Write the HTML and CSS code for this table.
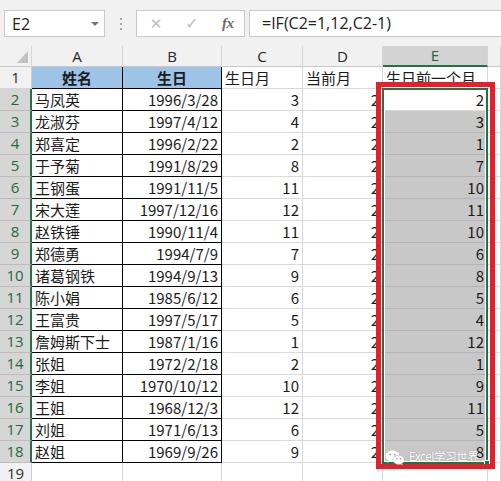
FILE: index.html
```html
<!DOCTYPE html>
<html lang="zh">
<head>
<meta charset="utf-8">
<link rel="stylesheet" href="styles.css">
</head>
<body>
<div class="app">
  <div class="toolbar">
    <div class="namebox"><span>E2</span><i class="caret"></i></div>
    <div class="grip"><i></i><i></i><i></i></div>
    <div class="fxbox">
      <span class="ico x">✕</span>
      <span class="ico ok">✓</span>
      <span class="ico fx">fx</span>
    </div>
    <div class="formula">=IF(C2=1,12,C2-1)</div>
  </div>

  <div class="sheet">
    <div class="row colhead">
      <div class="h corner"><i class="tri"></i></div>
      <div class="h">A</div>
      <div class="h">B</div>
      <div class="h">C</div>
      <div class="h">D</div>
      <div class="h sel">E</div>
      <div class="h"></div>
    </div>

    <div class="row">
      <div class="rh">1</div>
      <div class="c t head">姓名</div>
      <div class="c t head">生日</div>
      <div class="c">生日月</div>
      <div class="c">当前月</div>
      <div class="c">生日前一个月</div>
      <div class="c"></div>
    </div>

    <div class="row"><div class="rh on">2</div><div class="c t">马凤英</div><div class="c t n">1996/3/28</div><div class="c n">3</div><div class="c n">2</div><div class="c n act">2</div><div class="c"></div></div>
    <div class="row"><div class="rh on">3</div><div class="c t">龙淑芬</div><div class="c t n">1997/4/12</div><div class="c n">4</div><div class="c n">2</div><div class="c n g">3</div><div class="c"></div></div>
    <div class="row"><div class="rh on">4</div><div class="c t">郑喜定</div><div class="c t n">1996/2/22</div><div class="c n">2</div><div class="c n">2</div><div class="c n g">1</div><div class="c"></div></div>
    <div class="row"><div class="rh on">5</div><div class="c t">于予菊</div><div class="c t n">1991/8/29</div><div class="c n">8</div><div class="c n">2</div><div class="c n g">7</div><div class="c"></div></div>
    <div class="row"><div class="rh on">6</div><div class="c t">王钢蛋</div><div class="c t n">1991/11/5</div><div class="c n">11</div><div class="c n">2</div><div class="c n g">10</div><div class="c"></div></div>
    <div class="row"><div class="rh on">7</div><div class="c t">宋大莲</div><div class="c t n">1997/12/16</div><div class="c n">12</div><div class="c n">2</div><div class="c n g">11</div><div class="c"></div></div>
    <div class="row"><div class="rh on">8</div><div class="c t">赵铁锤</div><div class="c t n">1990/11/4</div><div class="c n">11</div><div class="c n">2</div><div class="c n g">10</div><div class="c"></div></div>
    <div class="row"><div class="rh on">9</div><div class="c t">郑德勇</div><div class="c t n">1994/7/9</div><div class="c n">7</div><div class="c n">2</div><div class="c n g">6</div><div class="c"></div></div>
    <div class="row"><div class="rh on">10</div><div class="c t">诸葛钢铁</div><div class="c t n">1994/9/13</div><div class="c n">9</div><div class="c n">2</div><div class="c n g">8</div><div class="c"></div></div>
    <div class="row"><div class="rh on">11</div><div class="c t">陈小娟</div><div class="c t n">1985/6/12</div><div class="c n">6</div><div class="c n">2</div><div class="c n g">5</div><div class="c"></div></div>
    <div class="row"><div class="rh on">12</div><div class="c t">王富贵</div><div class="c t n">1997/5/17</div><div class="c n">5</div><div class="c n">2</div><div class="c n g">4</div><div class="c"></div></div>
    <div class="row"><div class="rh on">13</div><div class="c t">詹姆斯下士</div><div class="c t n">1987/1/16</div><div class="c n">1</div><div class="c n">2</div><div class="c n g">12</div><div class="c"></div></div>
    <div class="row"><div class="rh on">14</div><div class="c t">张姐</div><div class="c t n">1972/2/18</div><div class="c n">2</div><div class="c n">2</div><div class="c n g">1</div><div class="c"></div></div>
    <div class="row"><div class="rh on">15</div><div class="c t">李姐</div><div class="c t n">1970/10/12</div><div class="c n">10</div><div class="c n">2</div><div class="c n g">9</div><div class="c"></div></div>
    <div class="row"><div class="rh on">16</div><div class="c t">王姐</div><div class="c t n">1968/12/3</div><div class="c n">12</div><div class="c n">2</div><div class="c n g">11</div><div class="c"></div></div>
    <div class="row"><div class="rh on">17</div><div class="c t">刘姐</div><div class="c t n">1971/6/13</div><div class="c n">6</div><div class="c n">2</div><div class="c n g">5</div><div class="c"></div></div>
    <div class="row"><div class="rh on">18</div><div class="c t">赵姐</div><div class="c t n">1969/9/26</div><div class="c n">9</div><div class="c n">2</div><div class="c n g">8</div><div class="c"></div></div>
    <div class="row"><div class="rh">19</div><div class="c"></div><div class="c"></div><div class="c"></div><div class="c"></div><div class="c"></div><div class="c"></div></div>

    <div class="selection"><i class="handle"></i></div>
    <div class="redbox"></div>
    <div class="watermark">
      <svg class="wx" width="20" height="15" viewBox="0 0 20 15">
        <ellipse cx="7.5" cy="6" rx="7" ry="5.6" fill="#fff"/>
        <path d="M3 10 L2.4 13 L5.6 11 Z" fill="#fff"/>
        <circle cx="5.2" cy="4.6" r="0.9" fill="#9a9a9a"/>
        <circle cx="9.8" cy="4.6" r="0.9" fill="#9a9a9a"/>
        <ellipse cx="13.6" cy="9.8" rx="5.8" ry="4.6" fill="#fff" stroke="#b0b0b0" stroke-width="0.6"/>
        <path d="M16.8 13.4 L17.8 15 L15.2 14 Z" fill="#fff"/>
        <circle cx="11.8" cy="8.8" r="0.75" fill="#9a9a9a"/>
        <circle cx="15.4" cy="8.8" r="0.75" fill="#9a9a9a"/>
      </svg>
      <span>Excel学习世界</span>
    </div>
  </div>
</div>
</body>
</html>
```

FILE: styles.css
```css
* { box-sizing: border-box; margin: 0; padding: 0; }
html, body { width: 501px; height: 481px; overflow: hidden; background: #fff; }
body { font-family: "Noto Sans CJK SC", "Noto Sans", sans-serif; color: #1b1b1b; }

.app { width: 501px; }

/* formula bar */
.toolbar {
  height: 46px;
  background: #f1f1f1;
  display: flex;
  align-items: flex-start;
  padding-top: 10px;
}
.namebox {
  margin-left: 4px;
  width: 101px;
  height: 27px;
  background: #fff;
  border: 1px solid #c9c9c9;
  display: flex;
  align-items: center;
  justify-content: space-between;
  padding: 0 5px 0 7px;
  font-family: "Open Sans", sans-serif;
  font-size: 16px;
  color: #222;
}
.caret {
  width: 0; height: 0;
  border-left: 4px solid transparent;
  border-right: 4px solid transparent;
  border-top: 4px solid #777;
  margin-top: 1px;
}
.grip {
  width: 31px;
  height: 27px;
  display: flex;
  flex-direction: column;
  align-items: center;
  justify-content: center;
  gap: 3px;
}
.grip i { width: 2px; height: 2px; background: #a8a8a8; }
.fxbox {
  width: 109px;
  height: 27px;
  background: #fff;
  border: 1px solid #c9c9c9;
  display: flex;
  align-items: center;
  padding-left: 12px;
}
.ico { display: inline-block; text-align: center; }
.ico.x { width: 14px; color: #bdbdbd; font-size: 15px; font-family: "DejaVu Sans", sans-serif; }
.ico.ok { width: 16px; margin-left: 21px; color: #bdbdbd; font-size: 16px; font-family: "DejaVu Sans", sans-serif; }
.ico.fx { margin-left: 22px; color: #6b6b6b; font-family: "Liberation Serif", serif; font-style: italic; font-weight: bold; font-size: 15px; letter-spacing: -0.5px; }
.formula {
  flex: 1;
  margin-left: 4px;
  height: 27px;
  background: #fff;
  border: 1px solid #c9c9c9;
  border-right: none;
  padding-left: 12px;
  font-family: "Open Sans", sans-serif;
  font-size: 16px;
  line-height: 25px;
  color: #222;
}

/* sheet */
.sheet { position: relative; }
.row {
  display: grid;
  grid-template-columns: 32px 91px 99px 81px 80px 105px 13px;
  height: 22px;
}
.colhead { height: 21px; }
.h {
  background: #f1f1f1;
  border-right: 1px solid #d5d5d5;
  border-bottom: 1px solid #c8c8c8;
  text-align: center;
  font-family: "Open Sans", sans-serif;
  font-size: 15px;
  line-height: 20px;
  color: #262626;
}
.h.sel {
  background: #d3d3d3;
  color: #1d6b40;
  border-bottom: 2px solid #217346;
  line-height: 19px;
}
.corner {
  display: flex;
  align-items: flex-end;
  justify-content: flex-end;
  padding: 0 3px 3px 0;
}
.tri {
  width: 0; height: 0;
  border-left: 11px solid transparent;
  border-bottom: 12px solid #c2c2c2;
}

.rh {
  background: #f1f1f1;
  border-right: 1px solid #d0d0d0;
  border-bottom: 1px solid #d5d5d5;
  text-align: center;
  font-family: "Open Sans", sans-serif;
  font-size: 15px;
  line-height: 21px;
  color: #2e2e2e;
}
.rh.on {
  background: #d6d6d6;
  color: #1d6b40;
  border-right: 2px solid #217346;
  border-bottom-color: #bdbdbd;
}

.c {
  border-right: 1px solid #d9d9d9;
  border-bottom: 1px solid #d9d9d9;
  padding: 0 3px;
  font-size: 15px;
  line-height: 21px;
  white-space: nowrap;
  overflow: hidden;
}
.c.n { text-align: right; }
.c.t { border-right-color: #000; border-bottom-color: #000; }
.c.head {
  background: #9dc3e6;
  font-weight: bold;
  text-align: center;
}
.c.g { background: #c8c8c8; border-bottom-color: #b4b4b4; border-right-color: #b4b4b4; }

/* overlays */
.selection {
  position: absolute;
  left: 382px;
  top: 42px;
  width: 106px;
  height: 376px;
  border: 2px solid #217346;
  box-shadow: inset 0 0 0 1px #fff;
}
.handle {
  position: absolute;
  right: -4px;
  bottom: -4px;
  width: 6px;
  height: 6px;
  background: #217346;
  border: 1px solid #fff;
}
.redbox {
  position: absolute;
  left: 376px;
  top: 36px;
  width: 119px;
  height: 387px;
  border: 5px solid #e3202b;
}
.watermark {
  position: absolute;
  left: 385px;
  top: 401px;
  display: flex;
  align-items: center;
  gap: 4px;
  color: #fff;
  font-size: 11.5px;
  letter-spacing: -0.4px;
  line-height: 16px;
  white-space: nowrap;
  text-shadow: 0 0 1px rgba(0,0,0,0.35);
}
.wx { display: block; margin-top: 3px; }
```
